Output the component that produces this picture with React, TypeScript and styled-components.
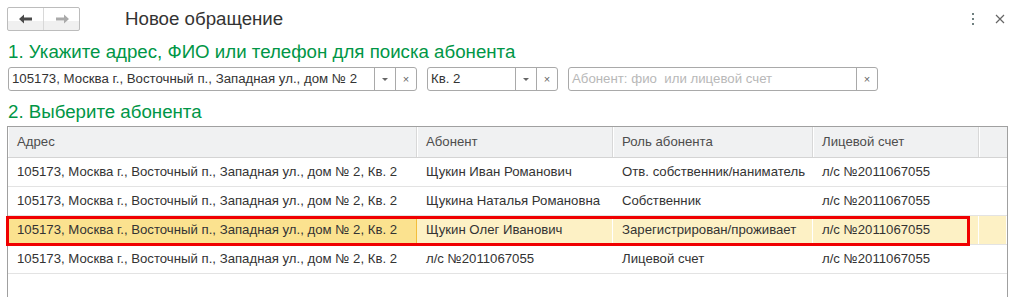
import React from "react";
import styled, { createGlobalStyle } from "styled-components";

const GlobalStyle = createGlobalStyle`
  html, body {
    margin: 0;
    padding: 0;
    background: #fff;
    overflow: hidden;
  }
  body {
    font-family: Arial, "Liberation Sans", sans-serif;
    color: #333;
  }
`;

type Row = {
  address: string;
  name: string;
  role: string;
  account: string;
  active?: boolean;
};

const ADDRESS = "105173, Москва г., Восточный п., Западная ул., дом № 2, Кв. 2";

const rows: Row[] = [
  { address: ADDRESS, name: "Щукин Иван Романович", role: "Отв. собственник/наниматель", account: "л/с №2011067055" },
  { address: ADDRESS, name: "Щукина Наталья Романовна", role: "Собственник", account: "л/с №2011067055" },
  { address: ADDRESS, name: "Щукин Олег Иванович", role: "Зарегистрирован/проживает", account: "л/с №2011067055", active: true },
  { address: ADDRESS, name: "л/с №2011067055", role: "Лицевой счет", account: "л/с №2011067055" },
];

function App() {
  return (
    <Page>
      <GlobalStyle />
      <TopBar>
        <NavGroup>
          <NavButton>
            <svg width="14" height="10" viewBox="0 0 14 10">
              <path d="M0 5 L5 0.5 L5 3.6 L13 3.6 L13 6.4 L5 6.4 L5 9.5 Z" fill="#4a4a4a" />
            </svg>
          </NavButton>
          <NavButton>
            <svg width="14" height="10" viewBox="0 0 14 10">
              <path d="M14 5 L9 0.5 L9 3.6 L1 3.6 L1 6.4 L9 6.4 L9 9.5 Z" fill="#aaa" />
            </svg>
          </NavButton>
        </NavGroup>
        <Title>Новое обращение</Title>
        <Spacer />
        <IconButton>
          <svg width="4" height="12" viewBox="0 0 4 12">
            <rect x="1" y="0" width="2" height="2" fill="#708080" />
            <rect x="1" y="5" width="2" height="2" fill="#708080" />
            <rect x="1" y="10" width="2" height="2" fill="#708080" />
          </svg>
        </IconButton>
        <IconButton>
          <svg width="10" height="10" viewBox="0 0 10 10">
            <path d="M1 1 L9 9 M9 1 L1 9" stroke="#666" strokeWidth="1.2" />
          </svg>
        </IconButton>
      </TopBar>

      <Heading $top={10}>1. Укажите адрес, ФИО или телефон для поиска абонента</Heading>
      <Fields>
        <Field $width={409}>
          <FieldText>105173, Москва г., Восточный п., Западная ул., дом № 2</FieldText>
          <FieldButton>
            <DropArrow />
          </FieldButton>
          <FieldButton>
            <ClearMark>×</ClearMark>
          </FieldButton>
        </Field>
        <Field $width={131}>
          <FieldText>Кв. 2</FieldText>
          <FieldButton>
            <DropArrow />
          </FieldButton>
          <FieldButton>
            <ClearMark>×</ClearMark>
          </FieldButton>
        </Field>
        <Field $width={310}>
          <FieldText $placeholder>Абонент: фио&nbsp; или лицевой счет</FieldText>
          <FieldButton>
            <ClearMark>×</ClearMark>
          </FieldButton>
        </Field>
      </Fields>

      <Heading $top={10}>2. Выберите абонента</Heading>
      <Table>
        <HeadRow>
          <HeadCell>Адрес</HeadCell>
          <HeadCell>Абонент</HeadCell>
          <HeadCell>Роль абонента</HeadCell>
          <HeadCell>Лицевой счет</HeadCell>
          <HeadCell />
        </HeadRow>
        {rows.map((r, i) => (
          <BodyRow key={i}>
            <Cell $active={r.active} $current={r.active}>{r.address}</Cell>
            <Cell $active={r.active}>{r.name}</Cell>
            <Cell $active={r.active}>{r.role}</Cell>
            <Cell $active={r.active}>{r.account}</Cell>
            <Cell $active={r.active} />
            {r.active && <RedFrame />}
          </BodyRow>
        ))}
        <EmptyArea />
      </Table>
    </Page>
  );
}

export default App;

const Page = styled.div`
  padding: 0 7px 0 7px;
  width: 1019px;
  height: 297px;
  box-sizing: border-box;
  display: flex;
  flex-direction: column;
`;

const TopBar = styled.div`
  display: flex;
  align-items: center;
  height: 24px;
  margin-top: 7px;
`;

const NavGroup = styled.div`
  display: flex;
  width: 73px;
  height: 24px;
  box-sizing: border-box;
  border: 1px solid #bcbcbc;
  border-radius: 2px;
  background: linear-gradient(#fff 0, #fff 60%, #f0f0f0 60%, #f0f0f0 100%);
`;

const NavButton = styled.div`
  flex: 1;
  display: flex;
  align-items: center;
  justify-content: center;
  & + & {
    border-left: 1px solid #d8d8d8;
  }
`;

const Title = styled.div`
  margin-left: 45px;
  font-size: 18.7px;
  color: #333;
`;

const Spacer = styled.div`
  flex: 1;
`;

const IconButton = styled.div`
  width: 30px;
  height: 24px;
  display: flex;
  align-items: center;
  justify-content: center;
  margin-right: -3px;
`;

const Heading = styled.div<{ $top: number }>`
  font-size: 18.7px;
  color: #009646;
  height: 22px;
  line-height: 22px;
  margin-top: ${(p) => p.$top}px;
  margin-left: 1px;
  white-space: nowrap;
`;

const Fields = styled.div`
  display: flex;
  gap: 10px;
  margin-left: 1px;
  margin-top: 4px;
`;

const Field = styled.div<{ $width: number }>`
  width: ${(p) => p.$width}px;
  height: 24px;
  box-sizing: border-box;
  border: 1px solid #a9a9a9;
  border-radius: 3px;
  display: flex;
  background: #fff;
`;

const FieldText = styled.div<{ $placeholder?: boolean }>`
  flex: 1;
  padding-left: 3px;
  font-size: 13.25px;
  line-height: 22px;
  white-space: nowrap;
  overflow: hidden;
  color: ${(p) => (p.$placeholder ? "#b8b8b8" : "#333")};
`;

const FieldButton = styled.div`
  width: 20px;
  border-left: 1px solid #a9a9a9;
  display: flex;
  align-items: center;
  justify-content: center;
`;

const DropArrow = styled.div`
  width: 0;
  height: 0;
  border-left: 3px solid transparent;
  border-right: 3px solid transparent;
  border-top: 3px solid #666;
`;

const ClearMark = styled.span`
  font-size: 11px;
  color: #666;
  line-height: 1;
`;

const Table = styled.div`
  margin-top: 3px;
  width: 1001px;
  flex: 1;
  box-sizing: border-box;
  border: 1px solid #a0a0a0;
  border-bottom: none;
  display: flex;
  flex-direction: column;
`;

const COLS = "409px 196px 200px 166px 1fr";

const HeadRow = styled.div`
  display: grid;
  grid-template-columns: ${COLS};
  height: 31px;
  border-bottom: 1px solid #d4d4d4;
  box-sizing: border-box;
`;

const HeadCell = styled.div`
  background: #f0f1f2;
  border-right: 1px solid #d8d8d8;
  box-shadow: inset 1px 0 0 #fff;
  padding-left: 9px;
  font-size: 13.2px;
  line-height: 30px;
  color: #4d4d4d;
  &:last-child {
    border-right: none;
  }
`;

const BodyRow = styled.div`
  position: relative;
  display: grid;
  grid-template-columns: ${COLS};
  height: 29px;
  box-sizing: border-box;
  border-bottom: 1px solid #e3e3e3;
`;

const Cell = styled.div<{ $active?: boolean; $current?: boolean }>`
  padding-left: 9px;
  font-size: 13.2px;
  line-height: 28px;
  white-space: nowrap;
  overflow: hidden;
  color: #333;
  box-sizing: border-box;
  background: ${(p) => (p.$current ? "#fbe28f" : p.$active ? "#fdf1c5" : "transparent")};
  border-right: ${(p) => (p.$active ? "1px solid #fff" : "1px solid transparent")};
  ${(p) =>
    p.$current &&
    `
    border: 1px solid #f3be3a;
    padding-left: 8px;
    line-height: 26px;
  `}
  &:last-of-type {
    border-right: none;
  }
`;

const RedFrame = styled.div`
  position: absolute;
  left: -2px;
  top: 0;
  width: 964px;
  height: 30px;
  box-sizing: border-box;
  border: 3px solid #f00000;
  pointer-events: none;
`;

const EmptyArea = styled.div`
  flex: 1;
`;
